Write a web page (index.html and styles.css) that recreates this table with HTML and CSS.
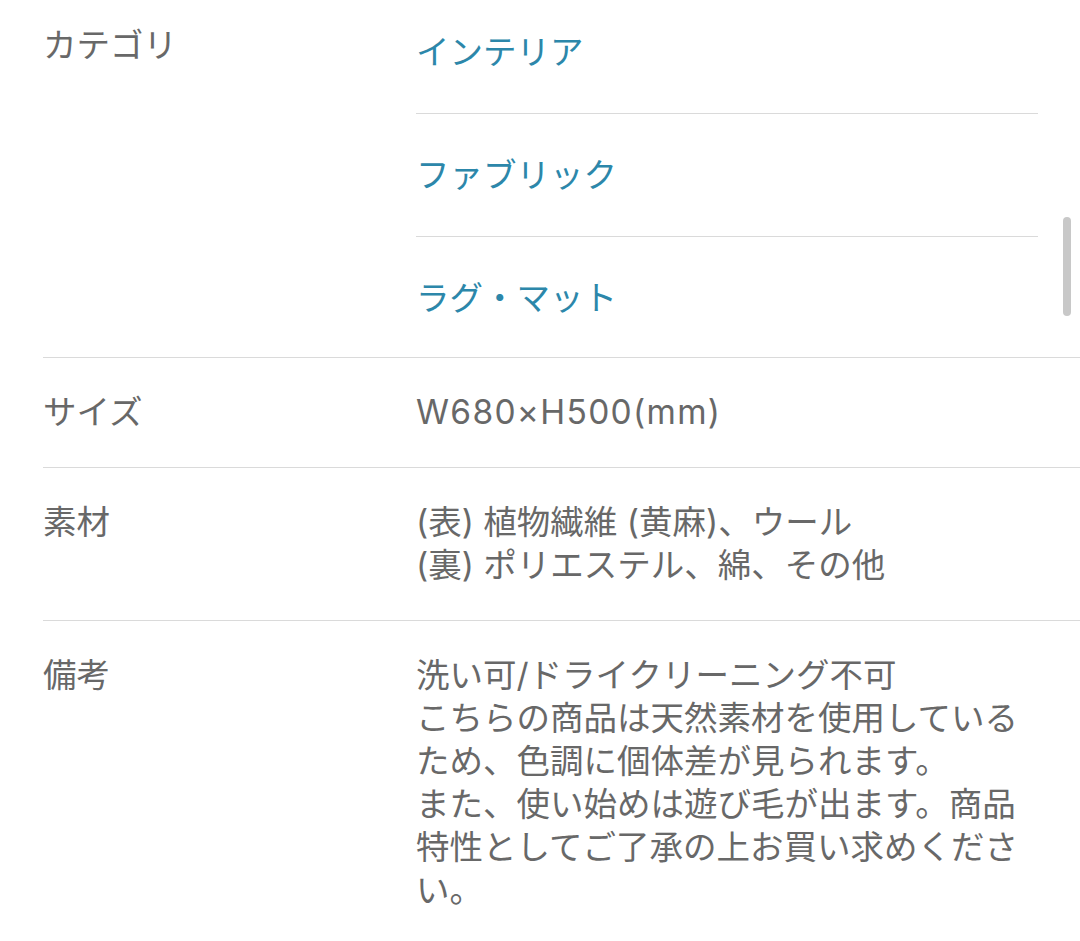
FILE: index.html
```html
<!DOCTYPE html>
<html lang="ja">
<head>
<meta charset="utf-8">
<title>商品詳細</title>
<link rel="stylesheet" href="styles.css">
</head>
<body>
<div class="spec">
  <div class="row row-cat">
    <div class="label">カテゴリ</div>
    <ul class="links">
      <li class="link-item"><a class="link" href="#">インテリア</a></li>
      <li class="link-item"><a class="link" href="#">ファブリック</a></li>
      <li class="link-item"><a class="link" href="#">ラグ・マット</a></li>
    </ul>
  </div>
  <div class="row">
    <div class="label">サイズ</div>
    <div class="value value-latin">W680×H500(mm)</div>
  </div>
  <div class="row">
    <div class="label">素材</div>
    <div class="value">(表) 植物繊維 (黄麻)、ウール<br>(裏) ポリエステル、綿、その他</div>
  </div>
  <div class="row row-last">
    <div class="label">備考</div>
    <div class="value">洗い可/ドライクリーニング不可<br>こちらの商品は天然素材を使用しているため、色調に個体差が見られます。<br>また、使い始めは遊び毛が出ます。商品特性としてご了承の上お買い求めください。</div>
  </div>
</div>
<div class="scrollbar"></div>
</body>
</html>
```

FILE: styles.css
```css
html, body {
  margin: 0;
  padding: 0;
  background: #ffffff;
}
body {
  font-family: Inter, "Noto Sans CJK JP", sans-serif;
  font-size: 33.5px;
  line-height: 43px;
  color: #686868;
  overflow: hidden;
}
.spec {
  margin-top: -9px;
  margin-left: 43px;
}
.row {
  display: grid;
  grid-template-columns: 373px 1fr;
  padding: 33px 0;
  border-bottom: 1px solid #dadada;
}
.row-cat {
  padding: 0;
}
.row-cat .label {
  padding-top: 33px;
}
.row-last {
  border-bottom: none;
}
.label {
  color: #686868;
}
.value {
  padding-right: 42px;
  word-break: break-all;
  line-break: anywhere;
}
.value-latin {
  letter-spacing: 1.3px;
}
.links {
  list-style: none;
  margin: 0;
  padding: 0 42px 0 0;
}
.link-item {
  padding: 40px 0 39px;
  border-bottom: 1px solid #dadada;
}
.link-item:last-child {
  border-bottom: none;
  padding-bottom: 37px;
}
.link {
  color: #2c87aa;
  text-decoration: none;
}
.scrollbar {
  position: fixed;
  top: 217px;
  right: 9px;
  width: 8px;
  height: 99px;
  border-radius: 4px;
  background: #c8c8c8;
}
```
